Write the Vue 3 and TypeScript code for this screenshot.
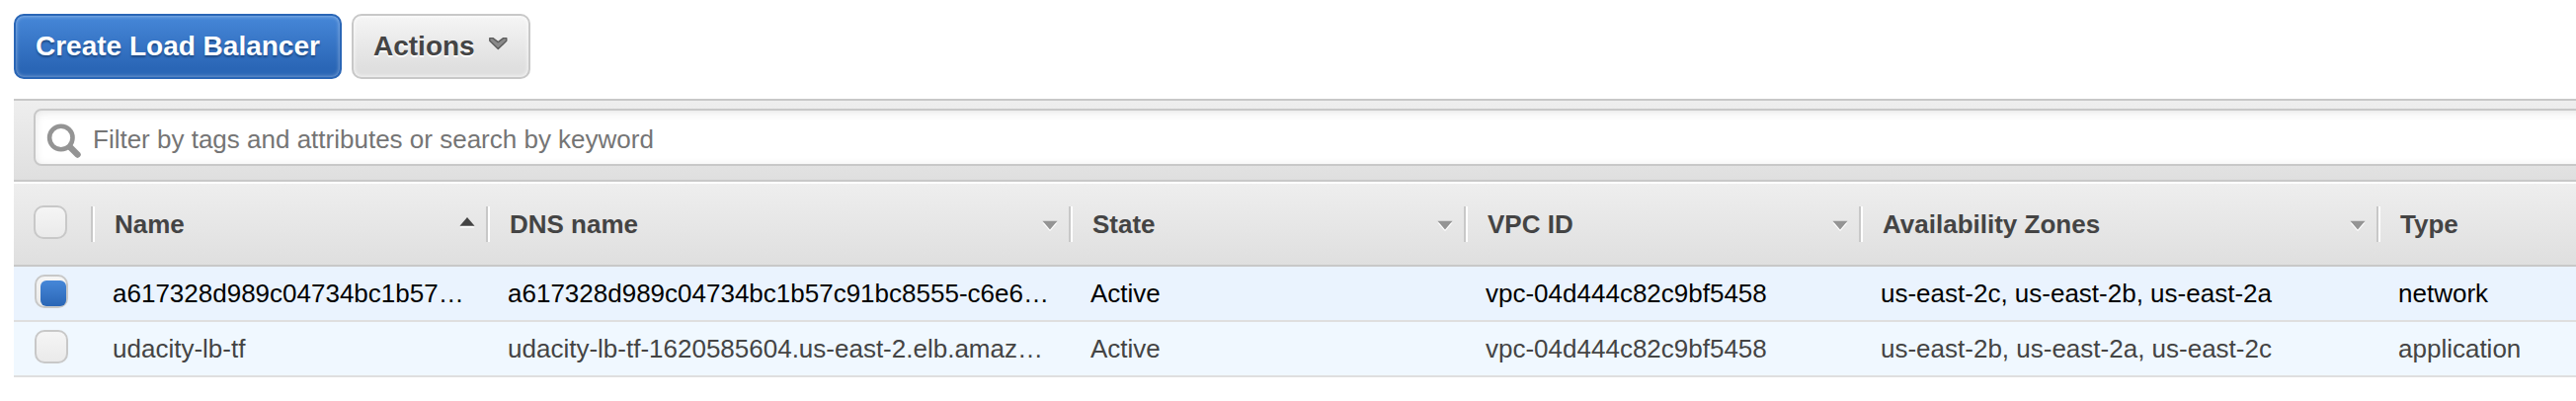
<script setup lang="ts">
interface Column {
  key: string
  label: string
  sort: 'asc' | 'menu' | 'none'
}

const columns: Column[] = [
  { key: 'name', label: 'Name', sort: 'asc' },
  { key: 'dns', label: 'DNS name', sort: 'menu' },
  { key: 'state', label: 'State', sort: 'menu' },
  { key: 'vpc', label: 'VPC ID', sort: 'menu' },
  { key: 'zones', label: 'Availability Zones', sort: 'menu' },
  { key: 'type', label: 'Type', sort: 'none' },
]

interface Row {
  selected: boolean
  cells: Record<string, string>
}

const rows: Row[] = [
  {
    selected: true,
    cells: {
      name: 'a617328d989c04734bc1b57…',
      dns: 'a617328d989c04734bc1b57c91bc8555-c6e6…',
      state: 'Active',
      vpc: 'vpc-04d444c82c9bf5458',
      zones: 'us-east-2c, us-east-2b, us-east-2a',
      type: 'network',
    },
  },
  {
    selected: false,
    cells: {
      name: 'udacity-lb-tf',
      dns: 'udacity-lb-tf-1620585604.us-east-2.elb.amaz…',
      state: 'Active',
      vpc: 'vpc-04d444c82c9bf5458',
      zones: 'us-east-2b, us-east-2a, us-east-2c',
      type: 'application',
    },
  },
]
</script>

<template>
  <main class="page">
    <div class="toolbar">
      <button class="btn primary">Create Load Balancer</button>
      <button class="btn secondary">
        Actions
        <svg class="chevron" width="20" height="14" viewBox="0 0 20 14">
          <path
            d="M1.8 1.6H5L10.3 5.6L15.6 1.6H18.8V4.2L10.3 12.6L1.8 4.2Z"
            fill="#8a8a8a"
            stroke="#5c5c5c"
            stroke-width="1.4"
            stroke-linejoin="round"
          />
        </svg>
      </button>
    </div>

    <section class="panel">
      <div class="filter">
        <div class="search">
          <svg class="lens" width="36" height="36" viewBox="0 0 36 36">
            <path d="M24 24L31.5 31.5" stroke="#949494" stroke-width="6.4" stroke-linecap="round" />
            <circle cx="14.8" cy="14.5" r="11.7" fill="none" stroke="#949494" stroke-width="4.6" />
          </svg>
          <span class="placeholder">Filter by tags and attributes or search by keyword</span>
        </div>
      </div>

      <div class="grid head">
        <div class="pick"><span class="box"></span></div>
        <div v-for="c in columns" :key="c.key" class="th">
          <span>{{ c.label }}</span>
          <svg v-if="c.sort === 'asc'" class="arrow" width="16" height="13" viewBox="0 0 16 13">
            <path d="M0.5 11.5L8 3.5L15.5 11.5Z" fill="#fff" />
            <path d="M0.5 9.7L8 1L15.5 9.7Z" fill="#444" />
          </svg>
          <svg v-else-if="c.sort === 'menu'" class="arrow down" width="16" height="13" viewBox="0 0 16 13">
            <path d="M0.5 2.6L8 11.2L15.5 2.6Z" fill="#fff" />
            <path d="M0.5 0.8L8 9.4L15.5 0.8Z" fill="#949494" />
          </svg>
        </div>
      </div>

      <div v-for="(r, i) in rows" :key="i" class="grid row" :class="{ selected: r.selected }">
        <div class="pick"><span class="box" :class="{ on: r.selected }"></span></div>
        <div v-for="c in columns" :key="c.key" class="td">{{ r.cells[c.key] }}</div>
      </div>
    </section>
  </main>
</template>

<style>
body {
  background: #fff;
}
</style>

<style scoped>
.page {
  box-sizing: border-box;
  height: 406px;
  padding: 14px 0 0 14px;
  overflow: hidden;
  background: #fff;
  color: #444;
  font: 26px/30px "Liberation Sans", Arial, sans-serif;
}
.toolbar {
  display: flex;
  gap: 10px;
  height: 66px;
  margin-bottom: 20px;
}
.btn {
  box-sizing: border-box;
  display: flex;
  align-items: center;
  height: 66px;
  padding: 0 20px;
  border: 2px solid;
  border-radius: 10px;
  font: bold 28px/32px "Liberation Sans", Arial, sans-serif;
  white-space: nowrap;
}
.primary {
  width: 332px;
  border-color: #2a66b6;
  background: linear-gradient(#4687d8, #2a66b6 85%);
  box-shadow: inset 0 0 4px rgba(255, 255, 255, 0.5);
  color: #fff;
  text-shadow: 0 2px 2px #1d4a85;
}
.secondary {
  width: 181px;
  border-color: #c8c8c8;
  background: linear-gradient(#f5f5f5, #dfdfdf 85%);
  box-shadow: inset 0 0 4px #fff;
  color: #444;
  text-shadow: 0 2px 0 #fff;
}
.chevron {
  margin: -6px 0 0 13px;
}
.filter {
  box-sizing: border-box;
  height: 84px;
  padding: 8px 0 0 20px;
  border-top: 2px solid #c8c8c8;
  border-bottom: 2px solid #c8c8c8;
  background: linear-gradient(#eee, #dfdfdf);
}
.search {
  box-sizing: border-box;
  display: flex;
  height: 58px;
  margin-right: -30px;
  padding: 13px 0 0 11px;
  border: 2px solid #c8c8c8;
  border-radius: 8px;
  background: #fff;
  box-shadow: inset 0 2px 10px rgba(0, 0, 0, 0.1);
}
.lens {
  flex: none;
  margin-right: 11px;
}
.placeholder {
  color: #757575;
  line-height: 32px;
}
.grid {
  box-sizing: border-box;
  display: grid;
  grid-template-columns: 78px 400px 590px 400px 400px 524px 1fr;
}
.head {
  height: 86px;
  border-top: 2px solid #fff;
  border-bottom: 2px solid #c8c8c8;
  background: linear-gradient(#eee, #dfdfdf) padding-box;
  font-weight: bold;
}
.pick {
  padding: 22px 0 0 20px;
}
.box {
  box-sizing: border-box;
  display: block;
  width: 34px;
  height: 34px;
  border: 2px solid #c8c8c8;
  border-radius: 10px;
  background: linear-gradient(#f5f5f5, #eaeaea);
}
.th {
  box-sizing: border-box;
  display: flex;
  justify-content: space-between;
  height: 36px;
  margin-top: 23px;
  padding: 3px 11px 0 22px;
  border-left: 2px solid #c8c8c8;
  box-shadow: inset 2px 0 #fff;
  white-space: pre;
}
.arrow {
  margin-top: 7px;
}
.down {
  margin-top: 11px;
}
.row {
  height: 56px;
  border-bottom: 2px solid #dfdfdf;
  background: #f0f8ff;
}
.row .pick {
  padding: 8px 0 0 21px;
}
.selected {
  background: #eaf3fe;
  color: #000;
}
.td {
  padding: 12px 0 0 22px;
  white-space: nowrap;
}
.on {
  padding: 4px 0 0 4px;
}
.on::before {
  display: block;
  width: 26px;
  height: 26px;
  border-radius: 6px;
  background: linear-gradient(#4687d8, #2a66b6);
  content: "";
}
</style>
